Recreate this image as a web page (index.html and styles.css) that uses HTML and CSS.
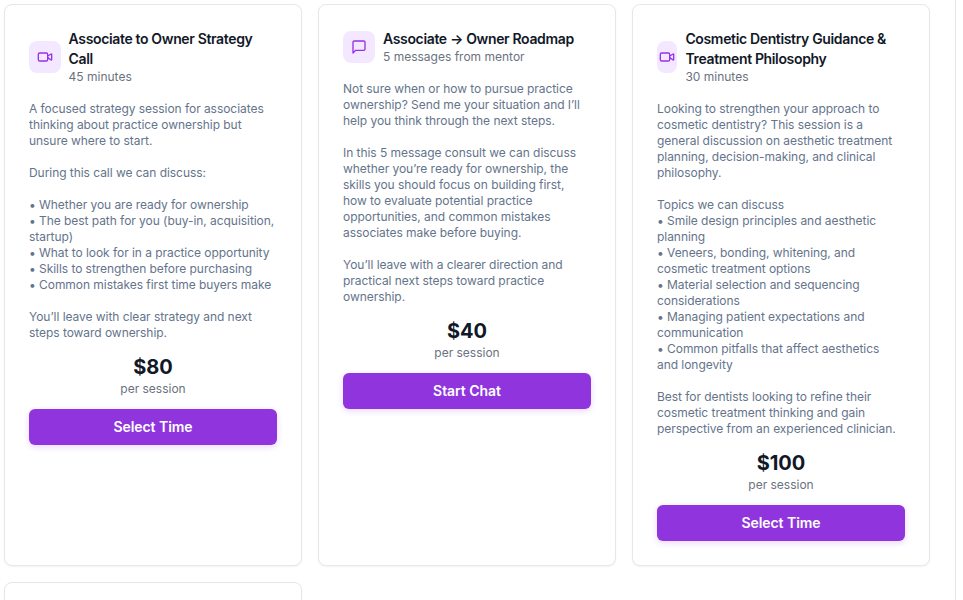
FILE: index.html
```html
<!DOCTYPE html>
<html lang="en">
<head>
    <meta charset="UTF-8">
    <meta name="viewport" content="width=device-width, initial-scale=1.0">
    <title>Mentor Services</title>
    <link rel="stylesheet" href="styles.css">
</head>
<body>
    <div class="page">
        <div class="service-grid">
            <div class="service-card">
                <div class="service-header">
                    <div class="service-icon">
                        <svg viewBox="0 0 24 24"><path d="m16 13 5.223 3.482a.5.5 0 0 0 .777-.416V7.87a.5.5 0 0 0-.752-.432L16 10.5"/><rect x="2" y="6" width="14" height="12" rx="2"/></svg>
                    </div>
                    <div>
                        <h3 class="service-title">Associate to Owner Strategy Call</h3>
                        <div class="service-meta">45 minutes</div>
                    </div>
                </div>
                <p class="service-desc">A focused strategy session for associates thinking about practice ownership but unsure where to start.

During this call we can discuss:

• Whether you are ready for ownership
• The best path for you (buy-in, acquisition, startup)
• What to look for in a practice opportunity
• Skills to strengthen before purchasing
• Common mistakes first time buyers make

You’ll leave with clear strategy and next steps toward ownership.</p>
                <div class="service-price">$80</div>
                <div class="service-unit">per session</div>
                <button class="service-btn">Select Time</button>
            </div>

            <div class="service-card">
                <div class="service-header">
                    <div class="service-icon">
                        <svg viewBox="0 0 24 24"><path d="M21 15a2 2 0 0 1-2 2H7l-4 4V5a2 2 0 0 1 2-2h14a2 2 0 0 1 2 2z"/></svg>
                    </div>
                    <div>
                        <h3 class="service-title">Associate → Owner Roadmap</h3>
                        <div class="service-meta">5 messages from mentor</div>
                    </div>
                </div>
                <p class="service-desc">Not sure when or how to pursue practice ownership? Send me your situation and I’ll help you think through the next steps.

In this 5 message consult we can discuss whether you’re ready for ownership, the skills you should focus on building first, how to evaluate potential practice opportunities, and common mistakes associates make before buying.

You’ll leave with a clearer direction and practical next steps toward practice ownership.</p>
                <div class="service-price">$40</div>
                <div class="service-unit">per session</div>
                <button class="service-btn">Start Chat</button>
            </div>

            <div class="service-card">
                <div class="service-header">
                    <div class="service-icon">
                        <svg viewBox="0 0 24 24"><path d="m16 13 5.223 3.482a.5.5 0 0 0 .777-.416V7.87a.5.5 0 0 0-.752-.432L16 10.5"/><rect x="2" y="6" width="14" height="12" rx="2"/></svg>
                    </div>
                    <div>
                        <h3 class="service-title">Cosmetic Dentistry Guidance &amp; Treatment Philosophy</h3>
                        <div class="service-meta">30 minutes</div>
                    </div>
                </div>
                <p class="service-desc">Looking to strengthen your approach to cosmetic dentistry? This session is a general discussion on aesthetic treatment planning, decision-making, and clinical philosophy.

Topics we can discuss
• Smile design principles and aesthetic planning
• Veneers, bonding, whitening, and cosmetic treatment options
• Material selection and sequencing considerations
• Managing patient expectations and communication
• Common pitfalls that affect aesthetics
and longevity

Best for dentists looking to refine their cosmetic treatment thinking and gain perspective from an experienced clinician.</p>
                <div class="service-price">$100</div>
                <div class="service-unit">per session</div>
                <button class="service-btn">Select Time</button>
            </div>

            <div class="service-card service-card-next"></div>
        </div>
    </div>
</body>
</html>
```

FILE: styles.css
```css
body {
    font-family: Inter, 'Liberation Sans', sans-serif;
    margin: 0;
    background-color: white;
    height: 600px;
    overflow: hidden;
}
.page {
    width: 956px;
    height: 600px;
    box-sizing: border-box;
    padding: 4px;
    border-right: 1px solid #e5e7eb;
    overflow: hidden;
}
.service-grid {
    display: grid;
    grid-template-columns: repeat(3, 298px);
    gap: 16px;
}
.service-card {
    display: flex;
    flex-direction: column;
    padding: 24px;
    background-color: white;
    border: 1px solid #e5e7eb;
    border-radius: 8px;
    box-shadow: 0 1px 2px rgba(0,0,0,0.05);
}
.service-card-next {
    height: 120px;
}
.service-header {
    display: flex;
    align-items: center;
    gap: 8px;
    margin-bottom: 16px;
}
.service-icon {
    display: flex;
    align-items: center;
    justify-content: center;
    width: 32px;
    height: 32px;
    background-color: #f3e8ff;
    border-radius: 8px;
}
.service-icon svg {
    flex: none;
    width: 16px;
    height: 16px;
    fill: none;
    stroke: #9333ea;
    stroke-width: 2;
    stroke-linecap: round;
    stroke-linejoin: round;
}
.service-title {
    margin: 0;
    font-size: 14px;
    line-height: 20px;
    font-weight: 600;
    letter-spacing: -0.025em;
    color: #111827;
}
.service-meta {
    font-size: 12px;
    line-height: 16px;
    color: #6b7280;
}
.service-desc {
    margin: 0 0 12px;
    font-size: 12px;
    line-height: 16px;
    letter-spacing: -0.05px;
    color: #64748b;
    white-space: pre-line;
}
.service-price {
    font-size: 20px;
    line-height: 28px;
    font-weight: 700;
    color: #111827;
    text-align: center;
}
.service-unit {
    font-size: 12px;
    line-height: 16px;
    color: #6b7280;
    text-align: center;
}
.service-btn {
    height: 36px;
    margin-top: 12px;
    padding: 0 0 2px;
    font-family: inherit;
    font-size: 14px;
    font-weight: 600;
    letter-spacing: -0.05px;
    color: white;
    background-color: #9035de;
    border: none;
    border-radius: 6px;
    box-shadow: 0 2px 6px rgba(147,51,234,0.2);
    cursor: pointer;
}
```
